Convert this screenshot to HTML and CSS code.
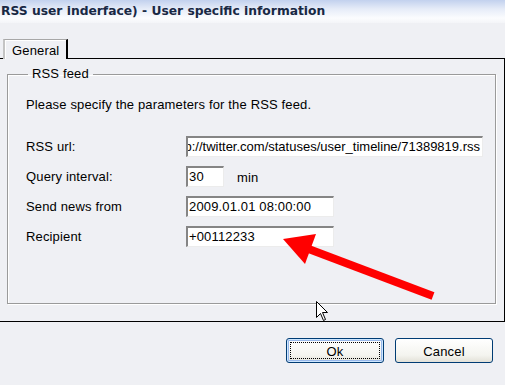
FILE: index.html
```html
<!DOCTYPE html>
<html lang="en">
<head>
    <meta charset="UTF-8">
    <meta name="viewport" content="width=device-width, initial-scale=1.0">
    <title>RSS user inderface) - User specific information</title>
    <link rel="stylesheet" href="styles.css">
</head>
<body>

    <div class="dialog">
        <div class="titlebar">RSS user inderface) - User specific information</div>

        <div class="tabs">
            <div class="tab">General</div>
        </div>

        <div class="panel">
            <fieldset class="group">
                <legend>RSS feed</legend>
                <p class="intro">Please specify the parameters for the RSS feed.</p>
                <div class="form">
                    <div class="label">RSS url:</div>
                    <div class="field field-url"><span>http://twitter.com/statuses/user_timeline/71389819.rss</span></div>

                    <div class="label">Query interval:</div>
                    <div class="field-row">
                        <div class="field field-short">30</div>
                        <span class="unit">min</span>
                    </div>

                    <div class="label">Send news from</div>
                    <div class="field field-mid">2009.01.01 08:00:00</div>

                    <div class="label">Recipient</div>
                    <div class="field field-mid">+00112233</div>
                </div>
            </fieldset>
        </div>

        <div class="buttons">
            <button class="button button-default"><span class="focus">Ok</span></button>
            <button class="button"><span class="focus-off">Cancel</span></button>
        </div>

        <!-- annotation drawn over the screenshot -->
        <svg class="arrow" width="505" height="385" viewBox="0 0 505 385">
            <line x1="433" y1="296" x2="306" y2="248" stroke="#ff0000" stroke-width="8"/>
            <polygon points="283,239 316,234 305,264" fill="#ff0000"/>
        </svg>

        <svg class="cursor" width="14" height="22" viewBox="0 0 14 22">
            <polygon points="0.5,0.5 0.5,16.5 4.5,12.5 7.5,19.5 9.5,18.5 6.5,11.5 11.5,11.5" fill="#fff" stroke="#000" stroke-width="1" stroke-linejoin="miter"/>
        </svg>
    </div>

</body>
</html>
```

FILE: styles.css
```css
body {
    margin: 0;
    font-family: "Liberation Sans", Arial, sans-serif;
    font-size: 13px;
    letter-spacing: 0.15px;
    color: #000;
    background-color: #eff0f4;
}
.dialog {
    position: relative;
    width: 505px;
    height: 385px;
    overflow: hidden;
    background-color: #eff0f4;
}
.titlebar {
    height: 23px;
    padding-left: 1px;
    line-height: 22px;
    font-family: "DejaVu Sans", Verdana, sans-serif;
    font-weight: bold;
    font-size: 12.3px;
    letter-spacing: 0;
    color: #182844;
    background: linear-gradient(#c2d1ee 0, #e6ecf8 9px, #fbfcfe 18px, #f4f5f8 23px);
}
.tabs {
    display: flex;
    padding-left: 3px;
    margin-top: 16px;
}
.tab {
    position: relative;
    height: 19px;
    margin-bottom: -1px;
    padding: 0 7px 0 7px;
    line-height: 21px;
    border-top: 1px solid #a7a7a7;
    border-left: 2px solid #c4c4c4;
    border-right: 2px solid #000;
    box-shadow: inset 1px 1px 0 #fff;
    background-color: #eff0f4;
}
.panel {
    border-top: 1px solid #000;
    border-right: 1px solid #000;
    border-bottom: 1px solid #000;
    height: 264px;
    padding-top: 7px;
    box-sizing: border-box;
}
.group {
    margin: 0 8px 0 7px;
    padding: 0 0 0 18px;
    height: 238px;
    box-sizing: border-box;
    border: 1px solid #9a9a9a;
    box-shadow: inset 1px 1px 0 #fff, 1px 1px 0 #fff;
}
.group legend {
    margin-left: 2px;
    padding: 0 4px 0 4px;
    line-height: 16px;
}
.intro {
    margin: 15px 0 0 0;
    line-height: 16px;
}
.form {
    display: grid;
    grid-template-columns: 160px auto;
    row-gap: 9px;
    margin-top: 23px;
    align-items: center;
}
.label {
    line-height: 16px;
    padding-top: 1px;
}
.field {
    height: 21px;
    box-sizing: border-box;
    padding-left: 1px;
    line-height: 18px;
    white-space: nowrap;
    overflow: hidden;
    background-color: #fff;
    border-top: 2px solid #858585;
    border-left: 2px solid #858585;
    border-right: 1px solid #ececec;
    border-bottom: 1px solid #ececec;
}
.field-url {
    width: 297px;
    display: flex;
    justify-content: flex-end;
    padding-right: 2px;
    letter-spacing: 0;
}
.field-url span {
    flex-shrink: 0;
}
.field-row {
    display: flex;
    align-items: center;
}
.field-short {
    width: 38px;
}
.unit {
    margin-left: 13px;
    padding-top: 1px;
}
.field-mid {
    width: 148px;
}
.buttons {
    display: flex;
    justify-content: flex-end;
    gap: 11px;
    padding-right: 12px;
    margin-top: 16px;
}
.button {
    width: 98px;
    height: 25px;
    padding: 3px;
    font-family: "Liberation Sans", Arial, sans-serif;
    font-size: 13px;
    letter-spacing: 0.15px;
    color: #000;
    border: 1px solid #003c74;
    border-radius: 3px;
    background: linear-gradient(#ffffff, #f4f4ef 70%, #e3e1d8);
}
.button-default {
    box-shadow: inset 0 0 0 1px #cee7ff, inset 0 0 0 2px #98b8ea;
}
.focus,
.focus-off {
    display: block;
    height: 100%;
    box-sizing: border-box;
    line-height: 17px;
    border: 1px dotted #000;
}
.focus-off {
    border-color: transparent;
}
.arrow {
    position: absolute;
    left: 0;
    top: 0;
    pointer-events: none;
}
.cursor {
    position: absolute;
    left: 316px;
    top: 301px;
    pointer-events: none;
}
```
